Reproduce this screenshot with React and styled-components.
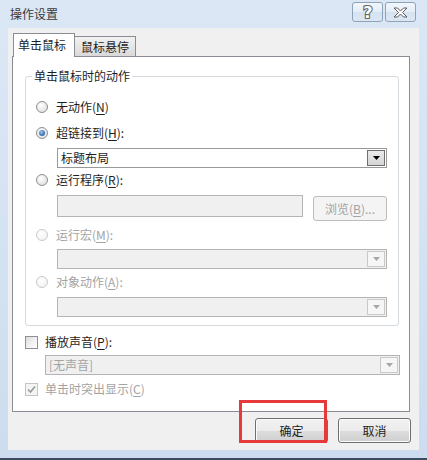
import React from "react";
import styled, { createGlobalStyle } from "styled-components";

const GlobalStyle = createGlobalStyle`
  body {
    margin: 0;
    background: #ffffff;
    font-family: "Noto Sans CJK SC", "Noto Sans", sans-serif;
    font-size: 12px;
  }
`;

function Radio({ checked, disabled }) {
    return <RadioDot $disabled={disabled}>{checked && <RadioInner />}</RadioDot>;
}

function Check({ checked, disabled }) {
    return (
        <CheckBox $disabled={disabled}>
            {checked && (
                <svg width="9" height="9" viewBox="0 0 9 9">
                    <path d="M1 4.5 L3.5 7 L8 1.5" fill="none" stroke={disabled ? "#9a9a9a" : "#222"} strokeWidth="1.6" />
                </svg>
            )}
        </CheckBox>
    );
}

function Combo({ text, disabled, $left, $width, $top }) {
    return (
        <ComboBox $disabled={disabled} $left={$left} $width={$width} $top={$top}>
            <span>{text}</span>
            <DropButton $disabled={disabled}>
                <svg width="7" height="4" viewBox="0 0 7 4">
                    <path d="M0 0 H7 L3.5 4 Z" fill={disabled ? "#a8a8a8" : "#000"} />
                </svg>
            </DropButton>
        </ComboBox>
    );
}

export default function App() {
    return (
        <>
            <GlobalStyle />
            <Window>
                <TitleBar>
                    <Title>操作设置</Title>
                    <CaptionButtons>
                        <CaptionButton>
                            <svg width="16" height="17" viewBox="0 0 16 17">
                                <text
                                    x="8"
                                    y="14"
                                    textAnchor="middle"
                                    fontFamily="DejaVu Sans, sans-serif"
                                    fontWeight="bold"
                                    fontSize="16"
                                    fill="#ffffff"
                                    stroke="#666666"
                                    strokeWidth="2.2"
                                    paintOrder="stroke"
                                >
                                    ?
                                </text>
                            </svg>
                        </CaptionButton>
                        <CaptionButton>
                            <svg width="15" height="11" viewBox="0 0 15 11">
                                <polygon
                                    points="1,1 4.5,1 7.5,4 10.5,1 14,1 9.5,5.5 14,10 10.5,10 7.5,7 4.5,10 1,10 5.5,5.5"
                                    fill="#fff"
                                    stroke="#5b5b5b"
                                    strokeWidth="1"
                                />
                            </svg>
                        </CaptionButton>
                    </CaptionButtons>
                </TitleBar>
                <Client>
                    <TabStrip>
                        <Tab $active>单击鼠标</Tab>
                        <Tab>鼠标悬停</Tab>
                    </TabStrip>
                    <Panel>
                        <GroupBox>
                            <Legend>单击鼠标时的动作</Legend>
                            <OptionRow $top={0}>
                                <Radio />
                                <Label>无动作(<Key>N</Key>)</Label>
                            </OptionRow>
                            <OptionRow $top={6}>
                                <Radio checked />
                                <Label>超链接到(<Key>H</Key>):</Label>
                            </OptionRow>
                            <Combo text="标题布局" $left={31} $top={5} />
                            <OptionRow $top={2}>
                                <Radio />
                                <Label>运行程序(<Key>R</Key>):</Label>
                            </OptionRow>
                            <FileRow>
                                <TextBox />
                                <SmallButton>浏览(<Key>B</Key>)...</SmallButton>
                            </FileRow>
                            <OptionRow $top={5}>
                                <Radio disabled />
                                <Label $disabled>运行宏(<Key>M</Key>):</Label>
                            </OptionRow>
                            <Combo disabled $left={31} $top={4} />
                            <OptionRow $top={3}>
                                <Radio disabled />
                                <Label $disabled>对象动作(<Key>A</Key>):</Label>
                            </OptionRow>
                            <Combo disabled $left={31} $top={5} />
                        </GroupBox>
                        <CheckRow $top={6}>
                            <Check />
                            <Label>播放声音(<Key>P</Key>):</Label>
                        </CheckRow>
                        <Combo disabled text="[无声音]" $left={20} $width={355} $top={3} />
                        <CheckRow $top={4}>
                            <Check checked disabled />
                            <Label $disabled>单击时突出显示(<Key>C</Key>)</Label>
                        </CheckRow>
                    </Panel>
                    <ButtonRow>
                        <DialogButton>确定</DialogButton>
                        <DialogButton>取消</DialogButton>
                    </ButtonRow>
                    <Highlight />
                </Client>
            </Window>
        </>
    );
}

const Window = styled.div`
    width: 427px;
    height: 460px;
    box-sizing: border-box;
    display: flex;
    flex-direction: column;
    background: linear-gradient(180deg, #dbe7f5 0%, #d3e2f2 60%, #cddcee 100%);
    border-bottom: 2px solid #3d4d60;
`;

const TitleBar = styled.div`
    height: 28px;
    flex-shrink: 0;
    display: flex;
    align-items: flex-start;
    justify-content: space-between;
    padding: 0 11px 0 10px;
`;

const Title = styled.div`
    font-size: 12px;
    line-height: 16px;
    margin-top: 6px;
    color: #3a3a3a;
`;

const CaptionButtons = styled.div`
    display: flex;
    gap: 2px;
    padding-top: 2px;
`;

const CaptionButton = styled.div`
    width: 31px;
    height: 20px;
    box-sizing: border-box;
    border: 1px solid #8ea2ba;
    border-radius: 3px;
    background: linear-gradient(180deg, #f3f7fc 0%, #e3ecf6 50%, #d5e2f0 51%, #dce7f3 100%);
    display: flex;
    align-items: center;
    justify-content: center;
`;

const Client = styled.div`
    position: relative;
    margin: 0 8px;
    height: 422px;
    flex-shrink: 0;
    box-sizing: border-box;
    background: #f0f0f0;
    padding: 5px 8px 0 4px;
`;

const TabStrip = styled.div`
    position: relative;
    z-index: 1;
    display: flex;
    align-items: flex-end;
    height: 24px;
    margin: 0 0 -1px 1px;
`;

const Tab = styled.div`
    box-sizing: border-box;
    border: 1px solid #898c95;
    color: #1e1e1e;
    line-height: 16px;
    white-space: nowrap;
    width: ${(p) => (p.$active ? "62px" : "61px")};
    height: ${(p) => (p.$active ? "24px" : "21px")};
    padding: ${(p) => (p.$active ? "3px 0 0 4px" : "2px 0 0 6px")};
    border-bottom: ${(p) => (p.$active ? "none" : "1px solid #898c95")};
    border-left: ${(p) => (p.$active ? "1px solid #898c95" : "none")};
    background: ${(p) => (p.$active ? "#ffffff" : "linear-gradient(180deg, #f2f2f2 0%, #e6e6e6 50%, #d9d9d9 100%)")};
`;

const Panel = styled.div`
    width: 398px;
    height: 356px;
    box-sizing: border-box;
    border: 1px solid #898c95;
    background: #ffffff;
    padding: 11px 9px 0 12px;
`;

const GroupBox = styled.fieldset`
    margin: 0;
    width: 374px;
    box-sizing: border-box;
    border: 1px solid #d5dadf;
    border-radius: 3px;
    padding: 13px 11px 8px 0;
`;

const Legend = styled.legend`
    margin-left: 6px;
    padding: 0 2px;
    line-height: 16px;
    color: #1e1e1e;
`;

const OptionRow = styled.div`
    display: flex;
    align-items: center;
    gap: 8px;
    height: 20px;
    padding-left: 10px;
    margin-top: ${(p) => p.$top}px;
`;

const CheckRow = styled.div`
    display: flex;
    align-items: center;
    gap: 7px;
    height: 20px;
    margin-top: ${(p) => p.$top}px;
`;

const Label = styled.span`
    line-height: 16px;
    white-space: nowrap;
    color: ${(p) => (p.$disabled ? "#a3a3a3" : "#1e1e1e")};
`;

const Key = styled.span`
    text-decoration: underline;
    text-underline-offset: 2px;
`;

const RadioDot = styled.span`
    width: 12px;
    height: 12px;
    box-sizing: border-box;
    border-radius: 50%;
    flex-shrink: 0;
    display: flex;
    align-items: center;
    justify-content: center;
    border: 1px solid ${(p) => (p.$disabled ? "#cbcbcb" : "#8c8f94")};
    background: ${(p) =>
        p.$disabled
            ? "radial-gradient(circle at 40% 35%, #ffffff 0%, #eeeeee 100%)"
            : "radial-gradient(circle at 40% 35%, #ffffff 0%, #e4e4e4 70%, #d2d2d2 100%)"};
`;

const RadioInner = styled.span`
    width: 6px;
    height: 6px;
    border-radius: 50%;
    background: radial-gradient(circle at 40% 35%, #9bc6f0 0%, #3c74b8 60%, #1c4f8c 100%);
`;

const CheckBox = styled.span`
    width: 13px;
    height: 13px;
    box-sizing: border-box;
    flex-shrink: 0;
    display: flex;
    align-items: center;
    justify-content: center;
    border: 1px solid ${(p) => (p.$disabled ? "#c4c4c4" : "#8c8f94")};
    background: ${(p) =>
        p.$disabled ? "#f4f4f4" : "linear-gradient(135deg, #dcdcdc 0%, #f4f4f4 60%, #ffffff 100%)"};
`;

const ComboBox = styled.div`
    position: relative;
    height: 20px;
    box-sizing: border-box;
    display: flex;
    align-items: center;
    justify-content: space-between;
    padding: 0 1px 0 3px;
    margin-left: ${(p) => p.$left}px;
    margin-top: ${(p) => p.$top}px;
    width: ${(p) => (p.$width ? `${p.$width}px` : "auto")};
    border: 1px solid ${(p) => (p.$disabled ? "#b4b4b4" : "#999999")};
    background: ${(p) => (p.$disabled ? "#f0f0f0" : "#ffffff")};
    color: ${(p) => (p.$disabled ? "#a3a3a3" : "#1e1e1e")};
    line-height: 16px;
`;

const DropButton = styled.span`
    width: 18px;
    height: 16px;
    box-sizing: border-box;
    display: flex;
    align-items: center;
    justify-content: center;
    border: 1px solid ${(p) => (p.$disabled ? "#c9c9c9" : "#707070")};
    background: ${(p) =>
        p.$disabled ? "#f6f6f6" : "linear-gradient(180deg, #eaeaea 0%, #d6d6d6 100%)"};
`;

const FileRow = styled.div`
    display: flex;
    align-items: flex-start;
    gap: 10px;
    height: 25px;
    margin: 5px 0 0 31px;
`;

const TextBox = styled.div`
    flex: 1;
    height: 22px;
    box-sizing: border-box;
    border: 1px solid #b4b4b4;
    background: #f0f0f0;
`;

const SmallButton = styled.div`
    width: 74px;
    height: 25px;
    box-sizing: border-box;
    margin-top: 1px;
    border: 1px solid #bcbcbc;
    border-radius: 3px;
    background: #f4f4f4;
    color: #a3a3a3;
    display: flex;
    align-items: center;
    justify-content: center;
    line-height: 16px;
`;

const ButtonRow = styled.div`
    display: flex;
    justify-content: flex-end;
    gap: 10px;
    margin-top: 6px;
`;

const DialogButton = styled.div`
    width: 73px;
    height: 25px;
    box-sizing: border-box;
    border: 1px solid #707070;
    border-radius: 3px;
    background: linear-gradient(180deg, #f2f2f2 0%, #ebebeb 50%, #dddddd 51%, #cfcfcf 100%);
    box-shadow: inset 0 0 0 1px #fbfbfb;
    color: #1e1e1e;
    display: flex;
    align-items: center;
    justify-content: center;
    line-height: 16px;
`;

const Highlight = styled.div`
    position: absolute;
    left: 231px;
    top: 372px;
    width: 88px;
    height: 43px;
    box-sizing: border-box;
    border: 3px solid #e6393c;
    pointer-events: none;
`;
